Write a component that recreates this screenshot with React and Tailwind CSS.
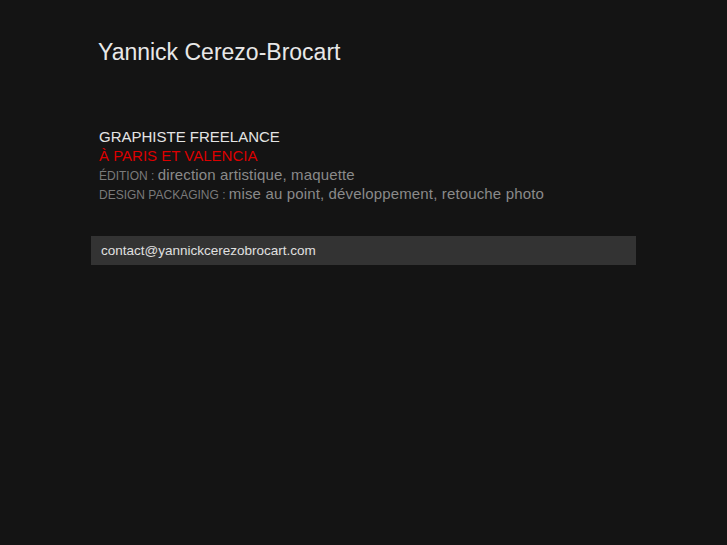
export default function App() {
  return (
    <div className="min-h-[545px] bg-[#141414] font-['Liberation_Sans',Arial,sans-serif]">
      <div className="ml-[91px] w-[545px] pt-[37px]">
        {/* Header */}
        <h1 className="pl-[7px] text-[23px] leading-[30px] text-[#e8e8e8]">Yannick Cerezo-Brocart</h1>

        {/* Intro */}
        <div className="mt-[60px] pl-[8px] text-[15px] leading-[19px]">
          <p className="text-[#e4e4e4]">GRAPHISTE FREELANCE</p>
          <p className="text-[#dc0000]">À PARIS ET VALENCIA</p>
          <p className="tracking-[0.15px] text-[#8a8a8a]">
            <span className="text-[12px] leading-none tracking-normal text-[#7a7a7a]">ÉDITION : </span>direction artistique, maquette
          </p>
          <p className="tracking-[0.15px] text-[#8a8a8a]">
            <span className="text-[12px] leading-none tracking-normal text-[#7a7a7a]">DESIGN PACKAGING : </span>mise au point, développement, retouche photo
          </p>
        </div>

        {/* Contact */}
        <div className="mt-[33px] flex h-[29px] items-center bg-[#333333] px-[10px] pt-[2px]">
          <a className="text-[13.5px] text-[#e0e0e0]" href="mailto:contact@yannickcerezobrocart.com">
            contact@yannickcerezobrocart.com
          </a>
        </div>
      </div>
    </div>
  );
}
